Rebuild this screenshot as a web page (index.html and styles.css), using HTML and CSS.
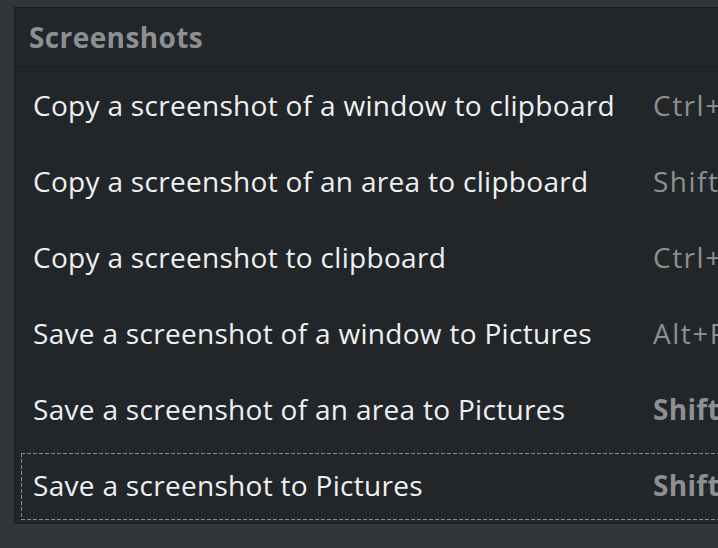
FILE: index.html
```html
<!DOCTYPE html>
<html>
<head>
<meta charset="utf-8">
<link rel="stylesheet" href="styles.css">
</head>
<body>
<div class="panel">
  <div class="header">Screenshots</div>
  <div class="row"><span class="label">Copy a screenshot of a window to clipboard</span><span class="accel">Ctrl+Alt+Print</span></div>
  <div class="row"><span class="label">Copy a screenshot of an area to clipboard</span><span class="accel">Shift+Ctrl+Print</span></div>
  <div class="row"><span class="label">Copy a screenshot to clipboard</span><span class="accel">Ctrl+Print</span></div>
  <div class="row"><span class="label">Save a screenshot of a window to Pictures</span><span class="accel">Alt+Print</span></div>
  <div class="row"><span class="label">Save a screenshot of an area to Pictures</span><span class="accel bold">Shift+Print</span></div>
  <div class="row focused"><span class="label">Save a screenshot to Pictures</span><span class="accel bold">Shift+Super+Print</span></div>
</div>
</body>
</html>
```
FILE: styles.css
```css
html, body {
  margin: 0;
  height: 548px;
  overflow: hidden;
}
body {
  background: #31363b;
  padding: 7px 0 0 14px;
  box-sizing: border-box;
  font-family: "Open Sans", sans-serif;
}
.panel {
  width: 900px;
  background: #232629;
  border: 1px solid #1c1e20;
  border-right: none;
}
.header {
  height: 59px;
  box-sizing: border-box;
  border-bottom: 1px solid #1c1e20;
  padding-left: 14px;
  display: flex;
  align-items: center;
  color: #8d9093;
  font-weight: bold;
  font-size: 28px;
  letter-spacing: 0.4px;
}
.row {
  position: relative;
  height: 76px;
  display: flex;
  align-items: center;
  padding-left: 18px;
  font-size: 28px;
  letter-spacing: 0.3px;
  white-space: nowrap;
}
.label {
  flex: 0 0 620px;
  color: #eff0f1;
}
.accel {
  color: #8d9093;
  letter-spacing: 1.5px;
}
.bold {
  font-weight: bold;
  letter-spacing: 0.3px;
}
.focused::after {
  content: "";
  position: absolute;
  left: 6px;
  top: 6px;
  bottom: 3px;
  right: 0;
  background:
    linear-gradient(to right, #8a8d90 4px, transparent 4px) left top / 6px 1px repeat-x,
    linear-gradient(to right, #8a8d90 4px, transparent 4px) left bottom / 6px 1px repeat-x,
    linear-gradient(to bottom, #8a8d90 4px, transparent 4px) left top / 1px 6px repeat-y;
}
```
